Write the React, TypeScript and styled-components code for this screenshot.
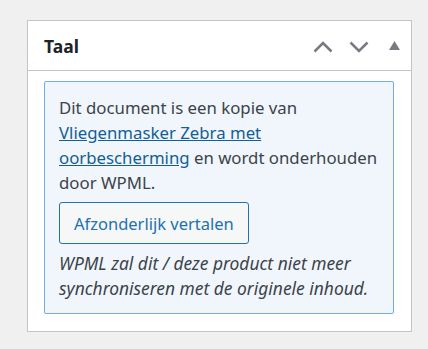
import React from 'react';
import styled, { createGlobalStyle } from 'styled-components';

const GlobalStyle = createGlobalStyle`
  body {
    margin: 0;
    background: #f0f0f1;
    font-family: 'Noto Sans', 'Open Sans', sans-serif;
  }
`;

const Page = styled.div`
  padding: 20px 16px 17px 27px;
`;

const Panel = styled.div`
  width: 385px;
  box-sizing: border-box;
  background: #fff;
  border: 1px solid #c3c4c7;
`;

const PanelHeader = styled.div`
  height: 49px;
  display: flex;
  align-items: center;
  justify-content: space-between;
  padding: 0 0 0 16px;
  border-bottom: 1px solid #c3c4c7;
`;

const Title = styled.h2`
  margin: 0;
  font-size: 17.5px;
  font-weight: 700;
  color: #1d2327;
`;

const Actions = styled.div`
  display: flex;
  align-items: center;
`;

const IconButton = styled.button<{ $w: number }>`
  width: ${(p) => p.$w}px;
  height: 30px;
  padding: 0;
  border: none;
  background: none;
  display: flex;
  align-items: center;
  justify-content: center;
  color: #787c82;
  cursor: pointer;
`;

const PanelBody = styled.div`
  padding: 10px 17px 17px 16px;
`;

const Notice = styled.div`
  background: #f0f6fc;
  border: 1px solid #72aee6;
  border-radius: 2px;
  padding: 13px 10px 12px 14px;
  color: #3c434a;
  font-size: 16.8px;
  line-height: 25px;
  white-space: nowrap;
`;

const Text = styled.p<{ $italic?: boolean }>`
  margin: 0;
  font-style: ${(p) => (p.$italic ? 'italic' : 'normal')};
  font-size: ${(p) => (p.$italic ? '17.4px' : 'inherit')};
`;

const Link = styled.a`
  color: #135e96;
  text-decoration: underline;
`;

const Button = styled.button`
  margin: 7px 0 7px;
  height: 42px;
  padding: 0 14px;
  border: 1px solid #2271b1;
  border-radius: 3px;
  background: #f6f7f7;
  color: #2271b1;
  font-family: inherit;
  font-size: 16.5px;
  cursor: pointer;
`;

const ChevronUp = () => (
  <svg width="20" height="12" viewBox="0 0 20 12" style={{ marginTop: 2 }}>
    <path d="M1.5 10.5 L10 2 L18.5 10.5" fill="none" stroke="currentColor" strokeWidth="2.6" />
  </svg>
);

const ChevronDown = () => (
  <svg width="20" height="12" viewBox="0 0 20 12" style={{ marginTop: 2 }}>
    <path d="M1.5 1.5 L10 10 L18.5 1.5" fill="none" stroke="currentColor" strokeWidth="2.6" />
  </svg>
);

const Triangle = () => (
  <svg width="11" height="9" viewBox="0 0 11 9">
    <path d="M5.5 0 L11 9 L0 9 Z" fill="currentColor" />
  </svg>
);

const App = () => (
  <>
    <GlobalStyle />
    <Page>
      <Panel>
        <PanelHeader>
          <Title>Taal</Title>
          <Actions>
            <IconButton $w={36} aria-label="Omhoog"><ChevronUp /></IconButton>
            <IconButton $w={36} aria-label="Omlaag"><ChevronDown /></IconButton>
            <IconButton $w={34} aria-label="Inklappen"><Triangle /></IconButton>
          </Actions>
        </PanelHeader>
        <PanelBody>
          <Notice>
            <Text>
              Dit document is een kopie van <br />
              <Link href="#">Vliegenmasker Zebra met<br />oorbescherming</Link> en wordt onderhouden<br />
              door WPML.
            </Text>
            <Button>Afzonderlijk vertalen</Button>
            <Text $italic>
              WPML zal dit / deze product niet meer<br />
              synchroniseren met de originele inhoud.
            </Text>
          </Notice>
        </PanelBody>
      </Panel>
    </Page>
  </>
);

export default App;
